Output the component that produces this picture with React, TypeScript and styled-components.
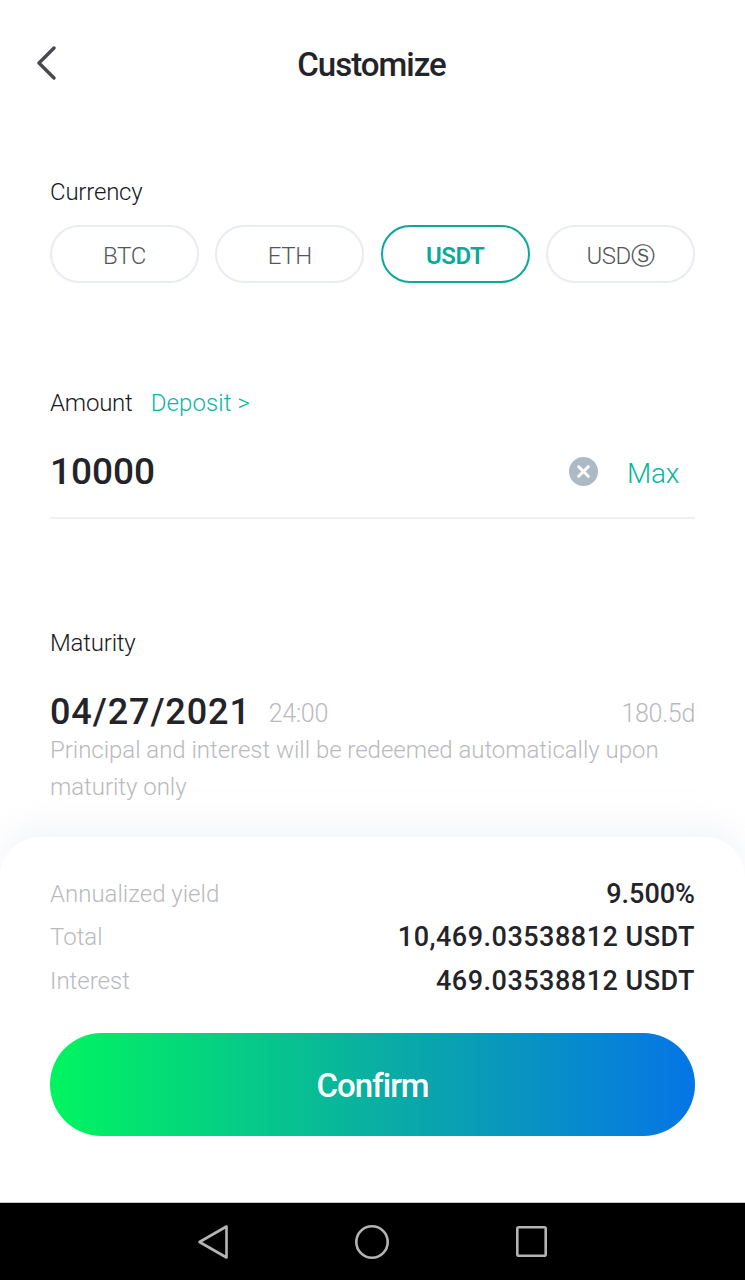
import React from 'react';
import styled, { createGlobalStyle } from 'styled-components';

const GlobalStyle = createGlobalStyle`
  html, body {
    margin: 0;
    padding: 0;
    background: #fff;
  }
  * {
    box-sizing: border-box;
  }
`;

const currencies = ['BTC', 'ETH', 'USDT', 'USDⓈ'];

const summary = [
  { label: 'Annualized yield', value: '9.500%', spacing: 0 },
  { label: 'Total', value: '10,469.03538812 USDT', spacing: 0.5 },
  { label: 'Interest', value: '469.03538812 USDT', spacing: 0.5 },
];

function App() {
  return (
    <Screen>
      <GlobalStyle />
      <Header>
        <BackButton>
          <svg width="20" height="34" viewBox="0 0 20 34" fill="none">
            <path d="M18 2L3 17l15 15" stroke="#48494d" strokeWidth="3.4" strokeLinecap="round" strokeLinejoin="round" />
          </svg>
        </BackButton>
        <Title>Customize</Title>
      </Header>

      <Content>
        <CurrencySection>
          <Label>Currency</Label>
          <PillRow>
            {currencies.map((c) => (
              <Pill key={c} $active={c === 'USDT'}>
                {c}
              </Pill>
            ))}
          </PillRow>
        </CurrencySection>

        <AmountSection>
          <LabelRow>
            <Label>Amount</Label>
            <DepositLink>Deposit &gt;</DepositLink>
          </LabelRow>
          <AmountRow>
            <AmountValue>10000</AmountValue>
            <svg width="29" height="29" viewBox="0 0 29 29">
              <circle cx="14.5" cy="14.5" r="14.5" fill="#aeb9c6" />
              <path d="M9.7 9.7l9.6 9.6M19.3 9.7l-9.6 9.6" stroke="#fff" strokeWidth="3" strokeLinecap="round" />
            </svg>
            <MaxLink>Max</MaxLink>
          </AmountRow>
        </AmountSection>

        <MaturitySection>
          <Label>Maturity</Label>
          <DateRow>
            <DateValue>04/27/2021</DateValue>
            <MutedValue>24:00</MutedValue>
            <Days>180.5d</Days>
          </DateRow>
          <Note>Principal and interest will be redeemed automatically upon maturity only</Note>
        </MaturitySection>
      </Content>

      <BottomPanel>
        <SummaryList>
          {summary.map((row) => (
            <SummaryRow key={row.label}>
              <SummaryLabel>{row.label}</SummaryLabel>
              <SummaryValue $spacing={row.spacing}>{row.value}</SummaryValue>
            </SummaryRow>
          ))}
        </SummaryList>
        <ConfirmButton>Confirm</ConfirmButton>
      </BottomPanel>

      <NavBar>
        <svg width="30" height="34" viewBox="0 0 30 34" fill="none">
          <path d="M28.5 1.5v31L1.5 17z" stroke="#b4b4b4" strokeWidth="2.6" strokeLinejoin="round" />
        </svg>
        <svg width="34" height="34" viewBox="0 0 34 34" fill="none">
          <circle cx="17" cy="17" r="15.7" stroke="#b4b4b4" strokeWidth="2.6" />
        </svg>
        <svg width="31" height="31" viewBox="0 0 31 31" fill="none">
          <rect x="1.3" y="1.3" width="28.4" height="28.4" rx="1.5" stroke="#b4b4b4" strokeWidth="2.6" />
        </svg>
      </NavBar>
    </Screen>
  );
}

export default App;

const Screen = styled.div`
  width: 745px;
  height: 1280px;
  display: flex;
  flex-direction: column;
  background: #fff;
  font-family: 'Roboto', 'DejaVu Sans', sans-serif;
  color: #232429;
  overflow: hidden;
`;

const Header = styled.header`
  position: relative;
  height: 128px;
  display: flex;
  align-items: center;
  justify-content: center;
  flex-shrink: 0;
`;

const BackButton = styled.div`
  position: absolute;
  left: 36px;
  top: 46px;
  line-height: 0;
`;

const Title = styled.h1`
  margin: 0;
  padding: 2px 2px 0 0;
  font-size: 33px;
  font-weight: 500;
  letter-spacing: -1px;
  line-height: 40px;
`;

const Content = styled.main`
  flex: 1;
  padding: 48px 50px 0;
  display: flex;
  flex-direction: column;
`;

const CurrencySection = styled.section`
  display: flex;
  flex-direction: column;
  gap: 17px;
`;

const Label = styled.div`
  font-size: 24px;
  font-weight: 300;
  line-height: 32px;
  letter-spacing: -0.2px;
  color: #17181c;
`;

const PillRow = styled.div`
  display: grid;
  grid-template-columns: repeat(4, 149px);
  justify-content: space-between;
`;

const Pill = styled.div<{ $active?: boolean }>`
  height: 58px;
  padding-top: 3px;
  border-radius: 29px;
  border: 2px solid ${({ $active }) => ($active ? '#0aa99a' : '#e9ecf3')};
  color: ${({ $active }) => ($active ? '#0aa99a' : '#55565b')};
  font-size: 24px;
  font-weight: ${({ $active }) => ($active ? 600 : 300)};
  letter-spacing: -0.4px;
  display: flex;
  align-items: center;
  justify-content: center;
`;

const AmountSection = styled.section`
  margin-top: 104px;
  display: flex;
  flex-direction: column;
`;

const LabelRow = styled.div`
  display: flex;
  align-items: center;
  gap: 18px;
`;

const DepositLink = styled.span`
  font-size: 24px;
  font-weight: 300;
  line-height: 32px;
  letter-spacing: 0.1px;
  color: #0bb5a4;
`;

const AmountRow = styled.div`
  margin-top: 15px;
  height: 85px;
  padding: 0 16px 8px 0;
  border-bottom: 2px solid #eef0f5;
  display: flex;
  align-items: center;
`;

const AmountValue = styled.div`
  flex: 1;
  font-size: 37px;
  font-weight: 500;
`;

const MaxLink = styled.span`
  margin: 3px 0 0 29px;
  font-size: 28px;
  font-weight: 300;
  letter-spacing: -0.3px;
  color: #0bb5a4;
`;

const MaturitySection = styled.section`
  margin-top: 108px;
  display: flex;
  flex-direction: column;
`;

const DateRow = styled.div`
  margin-top: 31px;
  display: flex;
  align-items: center;
  height: 44px;
`;

const DateValue = styled.div`
  font-size: 36px;
  font-weight: 500;
  letter-spacing: 0.9px;
`;

const MutedValue = styled.span`
  margin: 2px 0 0 18px;
  font-size: 25px;
  font-weight: 300;
  letter-spacing: -0.3px;
  color: #b9babd;
`;

const Days = styled(MutedValue)`
  margin-left: auto;
`;

const Note = styled.p`
  margin: -2px 0 0;
  font-size: 24px;
  font-weight: 300;
  line-height: 37px;
  letter-spacing: -0.03px;
  color: #b9babd;
`;

const BottomPanel = styled.section`
  height: 365px;
  flex-shrink: 0;
  padding: 35px 50px 0;
  background: #fff;
  border-radius: 40px 40px 0 0;
  box-shadow: 0 -14px 30px rgba(226, 230, 240, 0.35);
  display: flex;
  flex-direction: column;
`;

const SummaryList = styled.div`
  display: flex;
  flex-direction: column;
`;

const SummaryRow = styled.div`
  height: 43.5px;
  display: flex;
  align-items: center;
  justify-content: space-between;
`;

const SummaryLabel = styled.span`
  font-size: 24px;
  font-weight: 300;
  letter-spacing: 0;
  color: #b9babd;
`;

const SummaryValue = styled.span<{ $spacing: number }>`
  font-size: 27px;
  font-weight: 500;
  letter-spacing: ${({ $spacing }) => $spacing}px;
  color: #232429;
`;

const ConfirmButton = styled.button`
  margin-top: 30px;
  height: 103px;
  padding-top: 3px;
  border: none;
  border-radius: 52px;
  background: linear-gradient(90deg, #00f55f 0%, #0aa9a8 55%, #0575e6 100%);
  color: #fff;
  font-family: inherit;
  font-size: 33px;
  font-weight: 500;
  letter-spacing: -1px;
`;

const NavBar = styled.nav`
  height: 78px;
  flex-shrink: 0;
  background: #000;
  border-top: 1px solid #c8c8c8;
  display: flex;
  align-items: center;
  justify-content: space-between;
  padding: 0 198.5px 0 198px;
`;
